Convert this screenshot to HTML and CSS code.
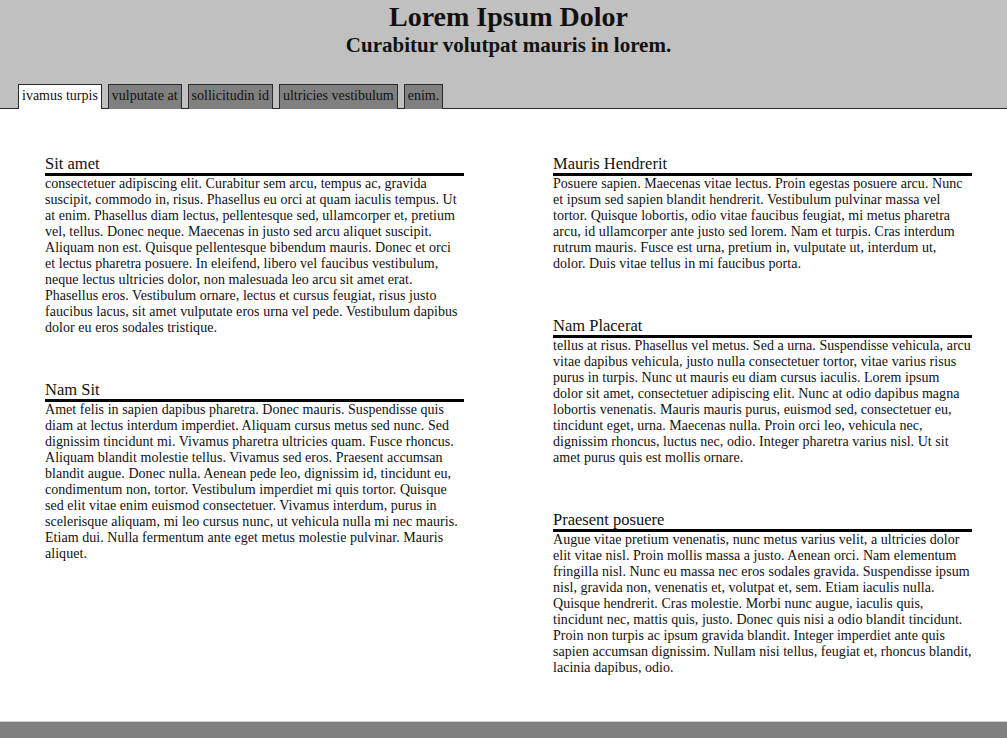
FILE: index.html
```html
<!DOCTYPE html>
<html lang="en">
<head>
<meta charset="utf-8">
<title>Lorem Ipsum Dolor</title>
<link rel="stylesheet" href="styles.css">
</head>
<body>
<header class="masthead">
  <div class="titles">
    <h1 class="title">Lorem Ipsum Dolor</h1>
    <p class="subtitle">Curabitur volutpat mauris in lorem.</p>
  </div>
  <nav class="tabs">
    <a class="tab active">ivamus turpis</a>
    <a class="tab">vulputate at</a>
    <a class="tab">sollicitudin id</a>
    <a class="tab">ultricies vestibulum</a>
    <a class="tab">enim.</a>
  </nav>
</header>
<main class="content">
  <div class="column">
    <section class="block">
      <h2 class="block-title">Sit amet</h2>
      <p class="block-text">consectetuer adipiscing elit. Curabitur sem arcu, tempus ac, gravida suscipit, commodo in, risus. Phasellus eu orci at quam iaculis tempus. Ut at enim. Phasellus diam lectus, pellentesque sed, ullamcorper et, pretium vel, tellus. Donec neque. Maecenas in justo sed arcu aliquet suscipit. Aliquam non est. Quisque pellentesque bibendum mauris. Donec et orci et lectus pharetra posuere. In eleifend, libero vel faucibus vestibulum, neque lectus ultricies dolor, non malesuada leo arcu sit amet erat. Phasellus eros. Vestibulum ornare, lectus et cursus feugiat, risus justo faucibus lacus, sit amet vulputate eros urna vel pede. Vestibulum dapibus dolor eu eros sodales tristique.</p>
    </section>
    <section class="block">
      <h2 class="block-title">Nam Sit</h2>
      <p class="block-text">Amet felis in sapien dapibus pharetra. Donec mauris. Suspendisse quis diam at lectus interdum imperdiet. Aliquam cursus metus sed nunc. Sed dignissim tincidunt mi. Vivamus pharetra ultricies quam. Fusce rhoncus. Aliquam blandit molestie tellus. Vivamus sed eros. Praesent accumsan blandit augue. Donec nulla. Aenean pede leo, dignissim id, tincidunt eu, condimentum non, tortor. Vestibulum imperdiet mi quis tortor. Quisque sed elit vitae enim euismod consectetuer. Vivamus interdum, purus in scelerisque aliquam, mi leo cursus nunc, ut vehicula nulla mi nec mauris. Etiam dui. Nulla fermentum ante eget metus molestie pulvinar. Mauris aliquet.</p>
    </section>
  </div>
  <div class="column">
    <section class="block">
      <h2 class="block-title">Mauris Hendrerit</h2>
      <p class="block-text">Posuere sapien. Maecenas vitae lectus. Proin egestas posuere arcu. Nunc et ipsum sed sapien blandit hendrerit. Vestibulum pulvinar massa vel tortor. Quisque lobortis, odio vitae faucibus feugiat, mi metus pharetra arcu, id ullamcorper ante justo sed lorem. Nam et turpis. Cras interdum rutrum mauris. Fusce est urna, pretium in, vulputate ut, interdum ut, dolor. Duis vitae tellus in mi faucibus porta.</p>
    </section>
    <section class="block">
      <h2 class="block-title">Nam Placerat</h2>
      <p class="block-text">tellus at risus. Phasellus vel metus. Sed a urna. Suspendisse vehicula, arcu vitae dapibus vehicula, justo nulla consectetuer tortor, vitae varius risus purus in turpis. Nunc ut mauris eu diam cursus iaculis. Lorem ipsum dolor sit amet, consectetuer adipiscing elit. Nunc at odio dapibus magna lobortis venenatis. Mauris mauris purus, euismod sed, consectetuer eu, tincidunt eget, urna. Maecenas nulla. Proin orci leo, vehicula nec, dignissim rhoncus, luctus nec, odio. Integer pharetra varius nisl. Ut sit amet purus quis est mollis ornare.</p>
    </section>
    <section class="block">
      <h2 class="block-title">Praesent posuere</h2>
      <p class="block-text">Augue vitae pretium venenatis, nunc metus varius velit, a ultricies dolor elit vitae nisl. Proin mollis massa a justo. Aenean orci. Nam elementum fringilla nisl. Nunc eu massa nec eros sodales gravida. Suspendisse ipsum nisl, gravida non, venenatis et, volutpat et, sem. Etiam iaculis nulla. Quisque hendrerit. Cras molestie. Morbi nunc augue, iaculis quis, tincidunt nec, mattis quis, justo. Donec quis nisi a odio blandit tincidunt. Proin non turpis ac ipsum gravida blandit. Integer imperdiet ante quis sapien accumsan dignissim. Nullam nisi tellus, feugiat et, rhoncus blandit, lacinia dapibus, odio.</p>
    </section>
  </div>
</main>
<footer class="footer"></footer>
</body>
</html>
```

FILE: styles.css
```css
* { box-sizing: border-box; }

html, body { height: 100%; }

body {
  margin: 0;
  display: flex;
  flex-direction: column;
  min-height: 100vh;
  font-family: "Liberation Serif", "Times New Roman", serif;
  color: #111;
  background: #fff;
}

.masthead {
  background: #c0c0c0;
  border-bottom: 1px solid #2a2a2a;
  padding-top: 1px;
}

.titles {
  text-align: center;
  padding-left: 10px;
}

.title {
  margin: 0;
  font-size: 28px;
  line-height: 32px;
  font-weight: bold;
  color: #111;
}

.subtitle {
  margin: 0;
  font-size: 21px;
  line-height: 24px;
  font-weight: bold;
  color: #111;
}

.tabs {
  display: flex;
  gap: 6px;
  padding-left: 18px;
  margin-top: 27px;
  margin-bottom: -1px;
}

.tab {
  display: block;
  font-size: 14px;
  line-height: 16px;
  padding: 3px 3px 4px;
  background: #808080;
  border: 1px solid #2a2a2a;
  border-bottom: none;
  color: #111;
}

.tab.active {
  background: #fff;
  padding-bottom: 5px;
}

.content {
  flex: 1;
  display: grid;
  grid-template-columns: 419px 419px;
  column-gap: 89px;
  padding: 46px 0 0 45px;
  align-items: start;
}

.block {
  margin-bottom: 45px;
}

.block-title {
  margin: 0;
  font-size: 16.5px;
  line-height: 18px;
  font-weight: normal;
  color: #111;
  border-bottom: 3px solid #000;
}

.block-text {
  margin: 0;
  font-size: 14px;
  line-height: 16px;
  letter-spacing: 0.04px;
}

.footer {
  height: 18px;
  background: #808080;
  border-top: 1px solid #d0d0d0;
}
```
